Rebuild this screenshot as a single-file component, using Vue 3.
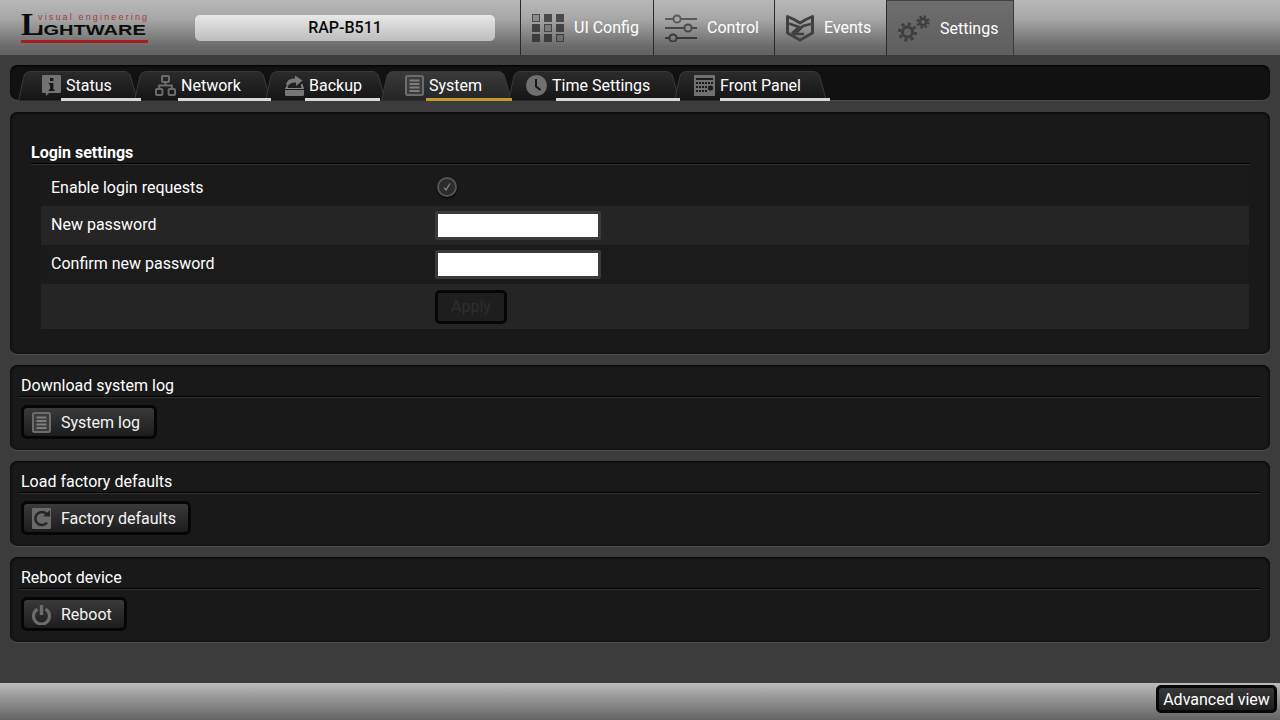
<script setup>
const navs = [
  { id: 'ui', label: 'UI Config', w: 133, pad: 11 },
  { id: 'control', label: 'Control', w: 121, pad: 11 },
  { id: 'events', label: 'Events', w: 112, pad: 11 },
  { id: 'settings', label: 'Settings', w: 128, pad: 11, active: true }
]
const tabs = [
  { id: 'status', label: 'Status', start: 18, end: 138, ms: 24, ul: 61, ue: 141 },
  { id: 'network', label: 'Network', start: 134, end: 271, ms: 21, ul: 178, ue: 271 },
  { id: 'backup', label: 'Backup', start: 265, end: 386, ms: 20, ul: 305, ue: 380 },
  { id: 'system', label: 'System', start: 381, end: 512, ms: 24, ul: 426, ue: 512, active: true },
  { id: 'time', label: 'Time Settings', start: 508, end: 680, ms: 18, ul: 556, ue: 680 },
  { id: 'front', label: 'Front Panel', start: 674, end: 827, ms: 20, ul: 720, ue: 830 }
].map((t, i, all) => {
  const w = t.end - t.start
  return {
    ...t,
    w,
    ml: i === 0 ? 8 : t.start - all[i - 1].end,
    d: `M0.5 30 L6 5 Q7.5 0.5 13 0.5 H${w - 14} Q${w - 9} 0.5 ${w - 7.5} 5 L${w - 0.5} 30 Z`,
    ulLeft: t.ul - t.start,
    ulWidth: t.ue - t.ul
  }
})
const rows = [
  { id: 'check', label: 'Enable login requests' },
  { id: 'pw1', label: 'New password' },
  { id: 'pw2', label: 'Confirm new password' },
  { id: 'apply', label: '' }
]
const sections = [
  { title: 'Download system log', btn: 'System log', icon: 'log', w: 136 },
  { title: 'Load factory defaults', btn: 'Factory defaults', icon: 'reset', w: 170 },
  { title: 'Reboot device', btn: 'Reboot', icon: 'power', w: 106 }
]
</script>

<template>
  <div class="page">
    <header class="top">
      <div class="brand">
        <div class="logo">
          <div class="logo-line">
            <span class="logo-l">L</span>
            <div class="logo-right">
              <div class="logo-sub">visual engineering</div>
              <div class="logo-rest">IGHTWARE</div>
            </div>
          </div>
          <div class="logo-bar"></div>
        </div>
        <div class="device">RAP-B511</div>
      </div>
      <nav class="nav">
        <div v-for="n in navs" :key="n.id" class="nav-item" :class="{ on: n.active }" :style="{ width: n.w + 'px', paddingLeft: n.pad + 'px' }">
          <svg v-if="n.id === 'ui'" class="nav-icon" width="32" height="28" viewBox="0 0 32 28">
            <rect x="0.5" y="0.5" width="7" height="7" fill="#8a8a8a" stroke="#4a4a4a"/>
            <rect x="12" y="0" width="8" height="8" fill="#4a4a4a"/>
            <rect x="24" y="0" width="8" height="8" fill="#4a4a4a"/>
            <rect x="0" y="10" width="8" height="8" fill="#424242"/>
            <rect x="12.5" y="10.5" width="7" height="7" fill="#7c7c7c" stroke="#444"/>
            <rect x="24" y="10" width="8" height="8" fill="#424242"/>
            <rect x="0" y="20" width="8" height="8" fill="#3c3c3c"/>
            <rect x="12" y="20" width="8" height="8" fill="#3c3c3c"/>
            <rect x="24.5" y="20.5" width="7" height="7" fill="#6c6c6c" stroke="#3c3c3c"/>
          </svg>
          <svg v-else-if="n.id === 'control'" class="nav-icon" width="32" height="28" viewBox="0 0 32 28" fill="none">
            <g stroke-width="2"><path d="M0 5H8M16 5H32" stroke="#5a5a5a"/><path d="M0 14H19M27 14H32" stroke="#484848"/><path d="M0 24H4M12 24H32" stroke="#383838"/></g>
            <circle cx="12" cy="5" r="3.6" stroke="#5a5a5a" stroke-width="2"/>
            <circle cx="23" cy="14" r="3.6" stroke="#484848" stroke-width="2"/>
            <circle cx="8" cy="24" r="3.6" stroke="#383838" stroke-width="2"/>
          </svg>
          <svg v-else-if="n.id === 'events'" class="nav-icon" width="28" height="28" viewBox="0 0 28 28" fill="none">
            <path d="M1.5 2.5 L8 5.5 L14 9 L20 5.5 L26.5 2.5 V19 L14 26 L1.5 19 Z" stroke="#404040" stroke-width="3" stroke-linejoin="round"/>
            <path d="M3 9.5 L13 13 L6 19.5 M25 10 L17 12 L9 20 L18 20" stroke="#404040" stroke-width="2.6"/>
          </svg>
          <svg v-else class="nav-icon" width="32" height="28" viewBox="0 0 32 28" fill="none">
            <circle cx="9.5" cy="18" r="5" stroke="#3e3e3e" stroke-width="3"/>
            <circle cx="9.5" cy="18" r="8" stroke="#3e3e3e" stroke-width="3.2" stroke-dasharray="3 3.28"/>
            <circle cx="25" cy="8" r="3.2" stroke="#3e3e3e" stroke-width="2.6"/>
            <circle cx="25" cy="8" r="5.5" stroke="#3e3e3e" stroke-width="2.4" stroke-dasharray="2.4 1.92"/>
          </svg>
          <span class="nav-label">{{ n.label }}</span>
        </div>
      </nav>
    </header>

    <main class="main">
      <div class="strip">
        <div v-for="t in tabs" :key="t.id" class="tab" :class="{ on: t.active }" :style="{ width: t.w + 'px', marginLeft: t.ml + 'px', paddingLeft: t.ms + 'px' }">
          <svg class="tab-shape" :width="t.w" height="30" :viewBox="`0 0 ${t.w} 30`">
            <path :d="t.d" class="tab-path" :fill="t.active ? 'url(#tabOn)' : 'url(#tabOff)'"/>
          </svg>
          <svg v-if="t.id === 'status'" class="tab-icon" width="19" height="21" viewBox="0 0 19 21">
            <path d="M1 0H18Q19 0 19 1V17Q19 18 18 18H7L4 21V18H1Q0 18 0 17V1Q0 0 1 0Z" fill="#727272"/>
            <rect x="8" y="3" width="3.4" height="3" fill="#161616"/>
            <path d="M6.8 8H11.4V14.5H12.6V16H6.8V14.5H8V9.5H6.8Z" fill="#161616"/>
          </svg>
          <svg v-else-if="t.id === 'network'" class="tab-icon" width="21" height="21" viewBox="0 0 21 21" fill="none" stroke="#6c6c6c" stroke-width="2">
            <rect x="7" y="1" width="7" height="6" rx="1"/>
            <rect x="1" y="14" width="6.4" height="6" rx="1"/>
            <rect x="13.6" y="14" width="6.4" height="6" rx="1"/>
            <path d="M10.5 7V10.5M4.2 14V10.5H16.8V14"/>
          </svg>
          <svg v-else-if="t.id === 'backup'" class="tab-icon" width="19" height="21" viewBox="0 0 19 21">
            <path d="M1 10Q2 3 10 3.5 L10 0.5 L17.5 5.5 L11 11 L11 7.5 Q5 7 3 11 Z" fill="#7a7a7a"/>
            <path d="M1.5 11H3L2.5 13H16.5L16 9H17.5L19 14H0Z" fill="#888"/>
            <path d="M0 15H19V19.5Q19 21 17.5 21H1.5Q0 21 0 19.5Z" fill="#777"/>
          </svg>
          <svg v-else-if="t.id === 'system'" class="tab-icon" width="19" height="21" viewBox="0 0 19 21">
            <rect x="1" y="1" width="17" height="19" rx="1.5" fill="#3c3c3c" stroke="#6c6c6c" stroke-width="2"/>
            <path d="M4.5 5.5H14.5M4.5 9H14.5M4.5 12.5H14.5M4.5 16H14.5" stroke="#7e7e7e" stroke-width="2.2"/>
          </svg>
          <svg v-else-if="t.id === 'time'" class="tab-icon" width="21" height="21" viewBox="0 0 21 21">
            <circle cx="10.5" cy="10.5" r="10.5" fill="#707070"/>
            <path d="M10 4V11.5L14.5 15" fill="none" stroke="#161616" stroke-width="2"/>
          </svg>
          <svg v-else class="tab-icon" width="21" height="21" viewBox="0 0 21 21">
            <rect width="21" height="21" fill="#707070"/>
            <g fill="#1c1c1c">
              <rect x="2" y="3" width="17" height="2"/>
              <rect x="2" y="7" width="2" height="2"/><rect x="5" y="7" width="2" height="2"/><rect x="8" y="7" width="2" height="2"/><rect x="11" y="7" width="2" height="2"/><rect x="14" y="7" width="2" height="2"/><rect x="17" y="7" width="2" height="2"/>
              <rect x="2" y="11" width="2" height="2"/><rect x="5" y="11" width="2" height="2"/><rect x="8" y="11" width="2" height="2"/><rect x="11" y="11" width="2" height="2"/>
              <rect x="2" y="15" width="2" height="2"/><rect x="5" y="15" width="2" height="2"/><rect x="8" y="15" width="2" height="2"/><rect x="11" y="15" width="2" height="2"/>
              <circle cx="16.5" cy="13" r="2.6"/>
            </g>
          </svg>
          <span class="tab-label">{{ t.label }}</span>
          <span class="tab-line" :style="{ left: t.ulLeft + 'px', width: t.ulWidth + 'px' }"></span>
        </div>
        <svg class="defs" width="0" height="0">
          <defs>
            <linearGradient id="tabOff" x1="0" y1="0" x2="0" y2="1"><stop offset="0" stop-color="#2b2b2b"/><stop offset="1" stop-color="#141414"/></linearGradient>
            <linearGradient id="tabOn" x1="0" y1="0" x2="0" y2="1"><stop offset="0" stop-color="#3a3a3a"/><stop offset="1" stop-color="#242424"/></linearGradient>
          </defs>
        </svg>
      </div>

      <section class="panel login">
        <h2 class="login-title">Login settings</h2>
        <div class="rows">
          <div v-for="r in rows" :key="r.id" class="row" :class="'row-' + r.id">
            <span class="row-label">{{ r.label }}</span>
            <span v-if="r.id === 'check'" class="check">
              <svg width="10" height="10" viewBox="0 0 10 10" fill="none"><path d="M2 5.5L4 8L8 1.5" stroke="#8c8c8c" stroke-width="1.2"/></svg>
            </span>
            <input v-else-if="r.id !== 'apply'" class="field" type="password" />
            <button v-else class="apply" type="button">Apply</button>
          </div>
        </div>
      </section>

      <section v-for="s in sections" :key="s.title" class="panel block">
        <h3 class="block-title">{{ s.title }}</h3>
        <button class="btn" type="button" :style="{ width: s.w + 'px' }">
          <svg v-if="s.icon === 'log'" width="19" height="21" viewBox="0 0 19 21">
            <rect x="1" y="1" width="17" height="19" rx="1.5" fill="#3c3c3c" stroke="#6c6c6c" stroke-width="2"/>
            <path d="M4.5 5.5H14.5M4.5 9H14.5M4.5 12.5H14.5M4.5 16H14.5" stroke="#7e7e7e" stroke-width="2.2"/>
          </svg>
          <svg v-else-if="s.icon === 'reset'" width="19" height="21" viewBox="0 0 19 21">
            <rect width="19" height="21" rx="1" fill="#6a6a6a"/>
            <path d="M15 14.5A6.5 6.5 0 1 1 14.5 6" fill="none" stroke="#262626" stroke-width="2.6"/>
            <path d="M11 8.5H18V2Z" fill="#262626"/>
          </svg>
          <svg v-else width="19" height="21" viewBox="0 0 19 21" fill="none">
            <path d="M5.5 5.2A8 8 0 1 0 13.5 5.2" stroke="#6c6c6c" stroke-width="3.2"/>
            <path d="M9.5 1V11" stroke="#6c6c6c" stroke-width="3.4"/>
          </svg>
          <span>{{ s.btn }}</span>
        </button>
      </section>
    </main>

    <footer class="bottom">
      <button class="adv" type="button">Advanced view</button>
    </footer>
  </div>
</template>

<style>
html, body { margin: 0; background: #3c3c3c; }
</style>

<style scoped>
.page {
  width: 1280px;
  height: 720px;
  display: flex;
  flex-direction: column;
  overflow: hidden;
  background: #3c3c3c;
  font-family: Roboto, "Liberation Sans", sans-serif;
  font-size: 16px;
  color: #fff;
}
.top {
  height: 55px;
  flex: none;
  display: flex;
  background: linear-gradient(#b8b8b8 0%, #a6a6a6 35%, #6a6a6a 85%, #626262 100%);
}
.brand {
  width: 520px;
  flex: none;
  display: flex;
  align-items: flex-start;
  box-sizing: border-box;
  padding-left: 21px;
}
.logo {
  width: 127px;
  margin-top: 13px;
  display: flex;
  flex-direction: column;
  font-family: "Liberation Sans", sans-serif;
}
.logo-line { display: flex; height: 23px; }
.logo-l {
  width: 17px;
  flex: none;
  height: 23px;
  font-family: "Liberation Serif", serif;
  font-weight: 700;
  font-size: 32px;
  line-height: 23px;
  color: #0c0c0c;
}
.logo-right { flex: 1; display: flex; flex-direction: column; min-width: 0; }
.logo-sub {
  height: 10px;
  line-height: 8px;
  font-size: 9px;
  letter-spacing: 2.15px;
  color: #a23c3c;
  text-align: right;
  white-space: nowrap;
  font-family: "Liberation Sans", sans-serif;
}
.logo-rest {
  height: 13px;
  line-height: 13px;
  font-size: 15.5px;
  font-weight: 700;
  color: #0c0c0c;
  white-space: nowrap;
  transform: scaleX(1.29);
  transform-origin: left;
}
.logo-bar { height: 3px; background: #a81c1c; margin-top: 4px; }
.device {
  width: 300px;
  height: 26px;
  margin: 15px 0 0 47px;
  border-radius: 5px;
  background: linear-gradient(#e8e8e8, #bdbdbd);
  color: #0a0a0a;
  font-weight: 500;
  font-size: 16px;
  line-height: 26px;
  text-align: center;
}
.nav { display: flex; }
.nav-item {
  height: 55px;
  box-sizing: border-box;
  border-left: 1px solid #2a2a2a;
  display: flex;
  align-items: center;
  gap: 10px;
  color: #fff;
}
.nav-item.on {
  border-right: 1px solid #3a3a3a;
  background: linear-gradient(#6e6e6e, #5e5e5e);
  border-top: 1px solid #444;
}
.nav-icon { flex: none; }
.nav-label { white-space: nowrap; }
.main {
  flex: 1;
  padding: 10px 10px 0;
  display: flex;
  flex-direction: column;
}
.strip {
  height: 36px;
  box-sizing: border-box;
  padding-top: 6px;
  margin-bottom: 11px;
  display: flex;
  background: #111;
  border-radius: 8px;
  border-bottom: 1px solid #4c4c4c;
  box-shadow: inset 0 1px 2px #000;
  position: relative;
}
.defs { position: absolute; }
.tab {
  position: relative;
  box-sizing: border-box;
  height: 30px;
  flex: none;
  display: flex;
  align-items: flex-start;
  gap: 5px;
  padding-top: 4px;
}
.tab-shape { position: absolute; left: 0; top: 0; }
.tab-path { stroke: #3a3a3a; stroke-width: 1; }
.tab-icon { position: relative; flex: none; }
.tab-label { position: relative; line-height: 22px; white-space: nowrap; }
.tab-line {
  position: absolute;
  z-index: 1;
  top: 27px;
  height: 3px;
  background: #d8d8d8;
}
.tab.on .tab-line { background: #c59a2c; }
.panel {
  background: #191919;
  border-radius: 8px;
  box-sizing: border-box;
  border-bottom: 1px solid #4e4e4e;
  box-shadow: inset 0 1px 3px #0a0a0a, inset 1px 0 2px #111, inset -1px 0 2px #111;
  margin-bottom: 10px;
  flex: none;
}
.login { height: 243px; padding: 30px 20px 0 21px; }
.login-title {
  margin: 0;
  font-size: 16px;
  font-weight: 700;
  line-height: 21px;
  height: 22px;
  box-sizing: border-box;
  border-bottom: 1px solid #000;
  box-shadow: 0 1px 0 #333;
}
.rows { margin: 6px 1px 0 10px; }
.row {
  display: flex;
  align-items: center;
  padding-left: 10px;
  box-sizing: border-box;
}
.row-label { width: 384px; flex: none; position: relative; top: -1px; }
.row-check { height: 36px; background: #1a1a1a; }
.row-pw1 { height: 39px; background: #252525; }
.row-pw2 { height: 39px; background: #1b1b1b; }
.row-apply { height: 45px; background: #252525; }
.check {
  width: 20px;
  height: 20px;
  box-sizing: border-box;
  margin: -2px 0 0 2px;
  border-radius: 50%;
  border: 2px solid #555;
  background: #2c2c2c;
  box-shadow: 0 1px 2px #000;
  display: flex;
  align-items: center;
  justify-content: center;
}
.field {
  width: 166px;
  height: 29px;
  box-sizing: border-box;
  border: 3px solid #3a3a3a;
  border-radius: 2px;
  background: #fff;
  padding: 0;
  outline: none;
}
.apply {
  width: 72px;
  height: 34px;
  box-sizing: border-box;
  border: 3px solid #060606;
  border-radius: 5px;
  background: #1e1e1e;
  color: #2e2e2e;
  font: 16px Roboto, sans-serif;
  padding: 0;
}
.block { height: 86px; padding: 10px 10px 0 11px; }
.block-title {
  margin: 0;
  font-size: 16px;
  font-weight: 400;
  line-height: 21px;
  height: 22px;
  box-sizing: border-box;
  border-bottom: 1px solid #000;
  box-shadow: 0 1px 0 #333;
}
.btn {
  margin-top: 8px;
  height: 34px;
  box-sizing: border-box;
  border: 3px solid #060606;
  border-radius: 6px;
  padding: 0 0 0 8px;
  display: flex;
  align-items: center;
  gap: 10px;
  background: linear-gradient(#3a3a3a, #1c1c1c);
  color: #f4f4f4;
  font: 16px Roboto, sans-serif;
  white-space: nowrap;
}
.bottom {
  height: 37px;
  flex: none;
  box-sizing: border-box;
  padding: 2px 3px 0 0;
  display: flex;
  justify-content: flex-end;
  align-items: flex-start;
  background: linear-gradient(#bcbcbc, #a0a0a0 30%, #646464);
}
.adv {
  width: 121px;
  height: 28px;
  box-sizing: border-box;
  padding: 0;
  border: 3px solid #060606;
  border-radius: 5px;
  background: linear-gradient(#383838, #1e1e1e);
  color: #fff;
  font: 16px Roboto, sans-serif;
  white-space: nowrap;
}
</style>
